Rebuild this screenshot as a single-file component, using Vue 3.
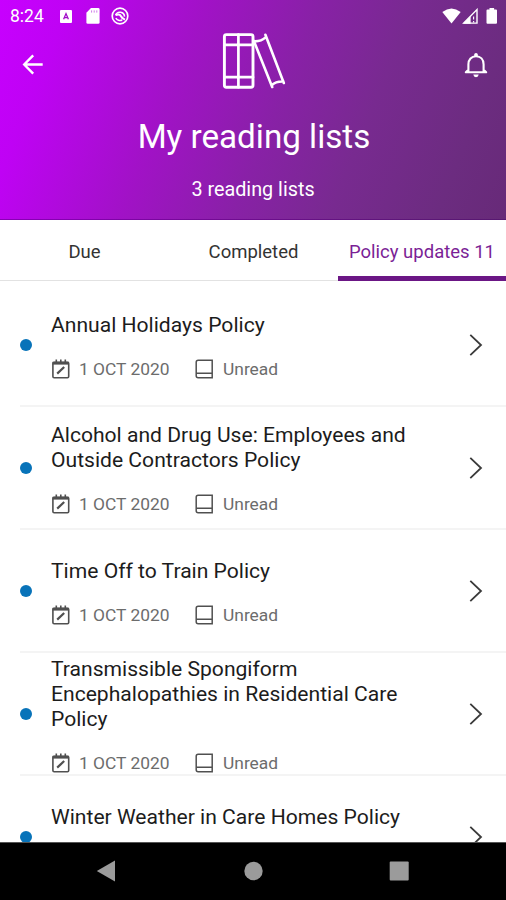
<script setup>
const tabs = [
  { label: 'Due' },
  { label: 'Completed' },
  { label: 'Policy updates 11', active: true },
]
const policies = [
  { title: ['Annual Holidays Policy'], date: '1 OCT 2020', state: 'Unread' },
  { title: ['Alcohol and Drug Use: Employees and', 'Outside Contractors Policy'], date: '1 OCT 2020', state: 'Unread' },
  { title: ['Time Off to Train Policy'], date: '1 OCT 2020', state: 'Unread' },
  { title: ['Transmissible Spongiform', 'Encephalopathies in Residential Care', 'Policy'], date: '1 OCT 2020', state: 'Unread' },
  { title: ['Winter Weather in Care Homes Policy'] },
]
</script>

<template>
  <div class="screen">
    <header class="hero">
      <div class="status">
        <span class="clock">8:24</span>
        <svg class="s-app" width="12" height="13" viewBox="0 0 12 13">
          <rect width="12" height="13" rx="1" fill="#fff" />
          <path d="M3.6 9.3 6 3.6 8.4 9.3M4.6 7.6H7.4" fill="none" stroke="#a00cc8" stroke-width="1.3" />
        </svg>
        <svg class="s-card" width="14" height="16" viewBox="0 0 14 16">
          <path d="M5 0H12.2Q13.6 0 13.6 1.4V14.4Q13.6 15.8 12.2 15.8H1.8Q.4 15.8 .4 14.4V4.8Z" fill="#fff" />
          <path d="M5.6 2.4V4.6M8.2 2.4V4.6M10.8 2.4V4.6" stroke="#cf7be8" stroke-width="1" />
        </svg>
        <svg class="s-ring" width="18" height="18" viewBox="0 0 18 18" fill="none" stroke="#fff">
          <circle cx="9" cy="9" r="7.8" stroke-width="1.7" />
          <path d="M4.6 8.2A4.6 4.6 0 0 1 13.5 9.6M11.2 13A4.6 4.6 0 0 1 4.9 11" stroke-width="1.6" />
          <path d="M4.6 8.2Q8.6 6.4 9.8 9T14 12.6" stroke-width="2" />
        </svg>
        <span class="spacer"></span>
        <svg width="19" height="16" viewBox="0 0 19 16">
          <path d="M.3 3.9Q9.5-3.1 18.7 3.9L9.5 15.6Z" fill="#fff" />
        </svg>
        <svg class="s-signal" width="16" height="16" viewBox="0 0 16 16">
          <path d="M1.7 15.1H15V1.6Z" fill="none" stroke="#fff" stroke-width="1.4" />
          <path d="M1 15.8H8.6V8Z" fill="#fff" />
          <path d="M11.6 8.5V11.5M11.6 13V14.5" stroke="#fff" stroke-width="1.1" />
        </svg>
        <svg class="s-battery" width="12" height="16" viewBox="0 0 12 16">
          <path d="M3.5 0H8.1V1.6H10Q11 1.6 11 2.6V14.8Q11 15.8 10 15.8H1.5Q.5 15.8 .5 14.8V2.6Q.5 1.6 1.5 1.6H3.5Z" fill="#fff" />
        </svg>
      </div>
      <div class="appbar">
        <svg class="back" width="22" height="22" viewBox="0 0 22 22" fill="none" stroke="#fff" stroke-width="2.4">
          <path d="M20.7 10.5H2.5M11.2 1.3 2.2 10.5 11.2 19.7" />
        </svg>
        <svg class="books" width="66" height="58" viewBox="0 0 66 58" fill="none" stroke="#fff" stroke-linejoin="round" stroke-linecap="round">
          <rect x="2.4" y="2.6" width="28.6" height="52.6" rx="2" stroke-width="2.9" />
          <path d="M16.4 2.6V55.2M2.4 12.8H31M2.4 45.2H31" stroke-width="2.7" />
          <path d="M31.8 8.8 50.2 55M43.4 2.8 61.8 51M33 9.4Q39.5 9.2 43.6 5.4M50 53Q54 49.2 61.4 49.6" stroke-width="2.6" />
        </svg>
        <svg class="bell" width="26" height="28" viewBox="0 0 26 28">
          <path d="M3 21.2H23M5.4 20.5V13.5C5.4 8.5 8.5 5.3 13 5.3S20.6 8.5 20.6 13.5V20.5M5.4 18.8 2.8 21.2M20.6 18.8 23.2 21.2" fill="none" stroke="#fff" stroke-width="2.1" stroke-linecap="round" />
          <path d="M11.2 5.5V3.6Q11.2 2 13 2T14.8 3.6V5.5ZM10.3 23.6H15.7Q15.4 26.2 13 26.2T10.3 23.6Z" fill="#fff" />
        </svg>
      </div>
      <h1>My reading lists</h1>
      <p>3 reading lists</p>
    </header>
    <nav class="tabs">
      <button v-for="tab in tabs" :key="tab.label" class="tab" :class="{ active: tab.active }">{{ tab.label }}</button>
    </nav>
    <main class="list">
      <article v-for="policy in policies" :key="policy.title[0]" class="row">
        <span class="dot"></span>
        <div class="body">
          <h2><span v-for="line in policy.title" :key="line">{{ line }}</span></h2>
          <div class="meta">
            <template v-if="policy.date">
              <svg width="20" height="20" viewBox="0 0 20 20" fill="none" stroke="#505050">
                <rect x="1.9" y="3.4" width="15.8" height="15.4" rx="1.2" stroke-width="1.6" />
                <path d="M1.5 4.2H18" stroke-width="2.8" />
                <path d="M5.3 .5V4M9.8 .5V4M14.3 .5V4" stroke-width="1.6" />
                <path d="M6.2 14.6 13.2 8" stroke-width="2.2" />
              </svg>
              <span class="date">{{ policy.date }}</span>
              <svg width="20" height="20" viewBox="0 0 20 20" fill="none" stroke="#505050" stroke-width="1.5">
                <path d="M18.2 1.2H4.2Q2.2 1.2 2.2 3.2V16.8Q2.2 18.8 4.2 18.8H18.2ZM2.6 14.2H18.2" />
              </svg>
              <span class="state">{{ policy.state }}</span>
            </template>
          </div>
        </div>
        <svg class="chevron" width="14" height="24" viewBox="0 0 14 24" fill="none" stroke="#3a3a3a" stroke-width="1.8">
          <path d="M1.3 1.8 12 12 1.3 22.2" />
        </svg>
      </article>
    </main>
    <footer class="navbar">
      <svg width="20" height="22" viewBox="0 0 20 22"><path d="M19 .6V21.4L.8 11Z" fill="#9b9b9b" /></svg>
      <svg width="20" height="20" viewBox="0 0 20 20"><circle cx="10.5" cy="10" r="9.2" fill="#9b9b9b" /></svg>
      <svg width="20" height="20" viewBox="0 0 20 20"><rect x=".7" y=".5" width="19" height="19" rx="1" fill="#9b9b9b" /></svg>
    </footer>
  </div>
</template>

<style>
body { margin: 0; background: #fff; }
</style>

<style scoped>
.screen {
  width: 506px;
  height: 900px;
  display: flex;
  flex-direction: column;
  overflow: hidden;
  background: #fff;
  font-family: Roboto, sans-serif;
}
svg { display: block; flex: none; }
.hero {
  height: 220px;
  flex: none;
  box-sizing: border-box;
  border-bottom: 1px solid rgba(60, 0, 90, .45);
  background: linear-gradient(112deg, #c800ff 0%, #bf02f4 12%, #a112c6 35%, #8821a6 54%, #782a90 70%, #6c2c80 88%, #672a78 100%);
  color: #fff;
  text-align: center;
}
.status {
  height: 32px;
  display: flex;
  align-items: center;
  padding: 0 8px 0 10px;
}
.clock { width: 50px; text-align: left; font-size: 17.5px; line-height: 32px; }
.s-card { margin-left: 14px; }
.s-ring { margin-left: 11px; }
.spacer { flex: 1; }
.s-signal { margin-left: 1px; }
.s-battery { margin-left: 8px; }
.appbar {
  height: 58px;
  display: flex;
  align-items: center;
  justify-content: space-between;
  padding: 0 17px 0 22px;
}
.back { margin-top: 7px; }
.bell { margin-top: 7px; }
.books { margin-left: 2px; }
h1 {
  margin: 27px 0 0;
  padding-left: 2px;
  font-size: 33.2px;
  line-height: 40px;
  font-weight: 400;
}
p { margin: 21px 0 0; font-size: 19.8px; line-height: 24px; }
.tabs {
  height: 61px;
  flex: none;
  box-sizing: border-box;
  display: grid;
  grid-template-columns: 169px 169px 168px;
  border-bottom: 1px solid #e2e2e2;
}
.tab {
  border: 0;
  padding: 2px 0 0;
  margin-bottom: -1px;
  background: none;
  font: 400 18.5px/24px Roboto, sans-serif;
  color: #333;
  white-space: nowrap;
}
.tab.active { color: #7b1f96; box-shadow: inset 0 -5px #6b1685; }
.list { height: 561px; flex: none; overflow: hidden; box-sizing: border-box; padding-top: 3px; }
.row {
  height: 123px;
  box-sizing: border-box;
  display: flex;
  align-items: center;
  margin-left: 20px;
  padding-right: 23px;
  border-bottom: 2px solid #f4f4f4;
}
.dot { width: 12px; height: 12px; border-radius: 50%; background: #0873b9; }
.body { flex: 1; margin-left: 19px; }
h2 { margin: -1px 0 0; font-size: 21.1px; line-height: 25px; font-weight: 400; color: #1c1c1c; white-space: nowrap; }
h2 span { display: block; }
.meta { height: 16px; margin-top: 24px; display: flex; align-items: center; font-size: 17.4px; line-height: 20px; color: #6c6c6c; }
.date { width: 115px; margin-left: 8px; white-space: nowrap; }
.state { margin-left: 9px; }
.navbar {
  height: 58px;
  flex: none;
  box-sizing: border-box;
  border-top: 1px solid #555;
  padding: 0 97px 2px 96px;
  background: #000;
  display: flex;
  align-items: center;
  justify-content: space-between;
}
</style>
